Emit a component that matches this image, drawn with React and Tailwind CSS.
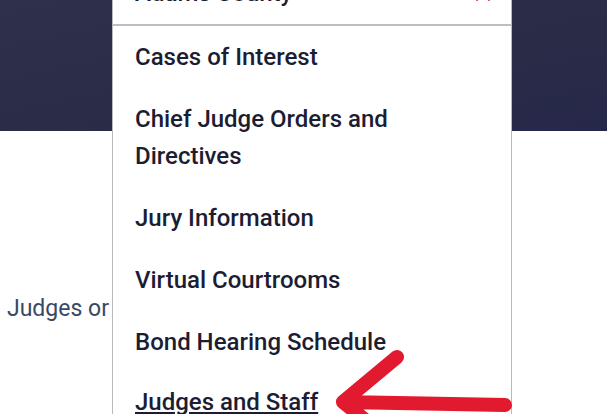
import React from "react";

const items = [
  "Cases of Interest",
  "Chief Judge Orders and Directives",
  "Jury Information",
  "Virtual Courtrooms",
  "Bond Hearing Schedule",
];

const App = () => {
  return (
    <div className="relative w-[607px] h-[414px] overflow-hidden bg-white font-['Roboto',sans-serif]">
      {/* Hero band */}
      <div className="h-[131px] bg-gradient-to-br from-[#2f3049] via-[#2b2c45] to-[#26284a]" />

      {/* Page body */}
      <div className="pt-[163px] pl-[7px]">
        <p className="text-[23px] leading-[30px] text-[#3b4766]">Judges or</p>
      </div>

      {/* Dropdown menu */}
      <div className="absolute left-[112px] top-[-38px] w-[400px] bg-white border-x border-[#b9b9c0]">
        <div className="flex items-center justify-between h-[64px] pl-[22px] pr-[20px] border-b-2 border-[#bdbdc4]">
          <span className="text-[24px] font-medium text-[#1c1d33]">Adams County</span>
          <svg width="16" height="10" viewBox="0 0 16 10" className="mt-[8px]">
            <path d="M2 8 L8 2 L14 8" fill="none" stroke="#e0403f" strokeWidth="2" strokeLinecap="round" />
          </svg>
        </div>
        <ul>
          {items.map((item) => (
            <li key={item} className="pl-[22px] pr-[60px] py-[12.5px] text-[24px] leading-[37px] font-medium text-[#1c1d33]">
              {item}
            </li>
          ))}
          <li className="pl-[22px] pr-[60px] pt-[10.5px] pb-[12px] text-[24px] leading-[37px] font-medium text-[#1c1d33]">
            <span className="underline underline-offset-[2px] decoration-[1.5px]">Judges and Staff</span>
          </li>
        </ul>
      </div>

      {/* Annotation arrow */}
      <svg className="absolute left-0 top-0 pointer-events-none" width="607" height="414" viewBox="0 0 607 414">
        <path
          d="M505 405 L343 402 M343 402 L397 357 M343 402 L390 440"
          fill="none"
          stroke="#e21a30"
          strokeWidth="14"
          strokeLinecap="round"
          strokeLinejoin="round"
        />
      </svg>
    </div>
  );
};

export default App;
